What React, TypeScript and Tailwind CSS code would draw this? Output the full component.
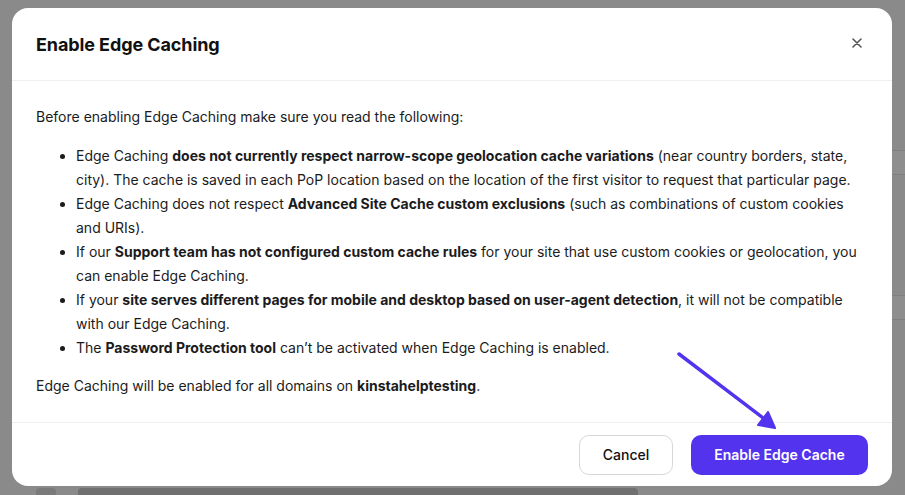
import React from "react";

const items: React.ReactNode[] = [
  <>
    Edge Caching <b>does not currently respect narrow-scope geolocation cache variations</b> (near country borders, state,
    city). The cache is saved in each PoP location based on the location of the first visitor to request that particular page.
  </>,
  <>
    Edge Caching does not respect <b>Advanced Site Cache custom exclusions</b> (such as combinations of custom cookies
    and URIs).
  </>,
  <>
    If our <b>Support team has not configured custom cache rules</b> for your site that use custom cookies or geolocation, you
    can enable Edge Caching.
  </>,
  <>
    If your <b>site serves different pages for mobile and desktop based on user-agent detection</b>, it will not be compatible
    with our Edge Caching.
  </>,
  <>
    The <b>Password Protection tool</b> can’t be activated when Edge Caching is enabled.
  </>,
];

export default function App() {
  return (
    <div className="relative h-[495px] w-[905px] overflow-hidden bg-[#8a8a8a] font-['Inter','Liberation_Sans',sans-serif] text-[#1b1b1d]">
      {/* page behind the overlay */}
      <div className="absolute right-0 top-[150px] h-[25px] w-[14px] border-y border-[#7f7f7f] bg-[#8e8e8e]" />
      <div className="absolute right-0 top-[295px] h-[25px] w-[14px] border-y border-[#7f7f7f] bg-[#8e8e8e]" />
      <div className="absolute left-[36px] top-[488px] flex items-center gap-[22px]">
        <div className="h-[10px] w-[20px] rounded bg-[#7a7a7a]" />
        <div className="h-[10px] w-[560px] rounded-sm bg-[#5f5f5f] opacity-60" />
      </div>

      {/* modal */}
      <div className="absolute left-[12px] top-[8px] flex h-[478px] w-[880px] flex-col rounded-[16px] bg-white">
        <div className="flex h-[73px] items-center justify-between border-b border-[#efefef] px-6">
          <h2 className="text-[18px] font-bold tracking-[-0.1px] text-[#111]">Enable Edge Caching</h2>
          <svg width="10" height="10" viewBox="0 0 10 10" className="mr-[6px] mt-[-2px]" stroke="#555" strokeWidth="1.6" strokeLinecap="round">
            <path d="M1 1l8 8M9 1L1 9" />
          </svg>
        </div>

        <div className="flex-1 px-6 pt-[24px] text-[14px] leading-[24px]">
          <p>Before enabling Edge Caching make sure you read the following:</p>
          <ul className="mt-[15px] list-disc pl-10 pr-1">
            {items.map((it, i) => (
              <li key={i}>{it}</li>
            ))}
          </ul>
          <p className="mt-[14px]">
            Edge Caching will be enabled for all domains on <b>kinstahelptesting</b>.
          </p>
        </div>

        <div className="flex h-[64px] items-center justify-end gap-[18px] border-t border-[#efefef] px-6">
          <button className="h-[40px] w-[94px] rounded-[10px] border border-[#d8d8dc] bg-white text-[14px] font-medium text-[#111]">
            Cancel
          </button>
          <button className="h-[40px] w-[177px] rounded-[10px] bg-[#5333ed] text-[14px] font-semibold text-white">
            Enable Edge Cache
          </button>
        </div>
      </div>

      {/* annotation arrow */}
      <svg className="absolute left-0 top-0" width="905" height="495" viewBox="0 0 905 495" fill="none">
        <path d="M679 354L771 424" stroke="#5333ed" strokeWidth="3.5" strokeLinecap="round" />
        <path d="M775 428L768 412L758 425Z" fill="#5333ed" stroke="#5333ed" strokeWidth="2" strokeLinejoin="round" />
      </svg>
    </div>
  );
}
